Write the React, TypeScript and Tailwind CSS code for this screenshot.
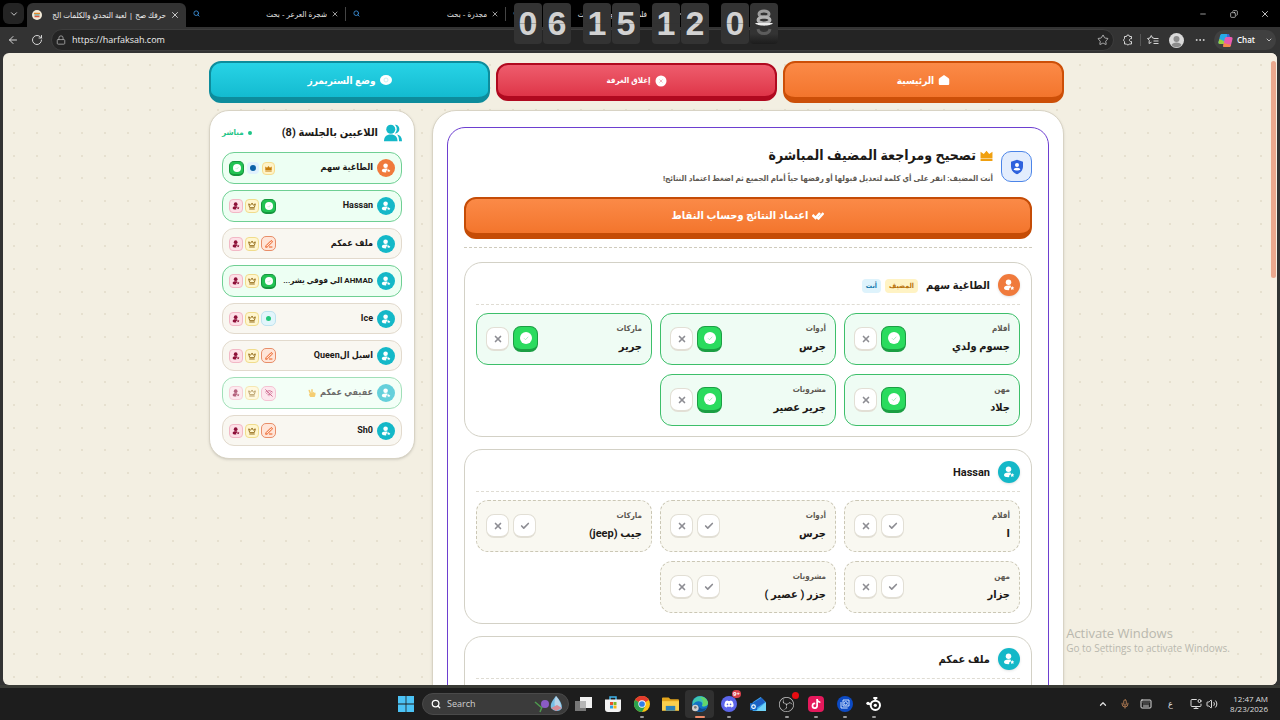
import React from 'react';
import {
    ArrowLeft, Check, ChevronDown, ChevronUp, Copy, Crown, Keyboard, Lock, Mic, Minus, MonitorDot,
    MoreHorizontal, PenLine, Plus, RotateCw, Search, Star, Volume2, WifiOff, X,
} from 'lucide-react';
import { FaDiscord, FaHandPeace, FaTiktok } from 'react-icons/fa';
import { SiObsstudio } from 'react-icons/si';

type Status = 'done' | 'writing' | 'online' | 'offline';

interface Player {
    name: string;
    status: Status;
    host?: boolean;
    hand?: boolean;
    active?: boolean;
}

interface Answer {
    category: string;
    word: string;
}

interface Review {
    name: string;
    host?: boolean;
    accepted: boolean;
    answers: Answer[];
}

const players: Player[] = [
    { name: 'الطاغية سهم', status: 'done', host: true, active: true },
    { name: 'Hassan', status: 'done', active: true },
    { name: 'ملف عمكم', status: 'writing' },
    { name: 'AHMAD الي فوقي يشر...', status: 'done', active: true },
    { name: 'Ice', status: 'online' },
    { name: 'اسيل الQueen', status: 'writing' },
    { name: 'عفيفي عمكم', status: 'offline', hand: true, active: true },
    { name: 'Sh0', status: 'writing' },
];

const reviews: Review[] = [
    {
        name: 'الطاغية سهم',
        host: true,
        accepted: true,
        answers: [
            { category: 'أفلام', word: 'جسوم ولدي' },
            { category: 'أدوات', word: 'جرس' },
            { category: 'ماركات', word: 'جرير' },
            { category: 'مهن', word: 'جلاد' },
            { category: 'مشروبات', word: 'جرير عصير' },
        ],
    },
    {
        name: 'Hassan',
        accepted: false,
        answers: [
            { category: 'أفلام', word: 'ا' },
            { category: 'أدوات', word: 'جرس' },
            { category: 'ماركات', word: 'جيب (jeep)' },
            { category: 'مهن', word: 'جزار' },
            { category: 'مشروبات', word: 'جزر ( عصير )' },
        ],
    },
    { name: 'ملف عمكم', accepted: false, answers: [] },
];

/* ---------- shared icons ---------- */

const PersonGlyph = ({ className }: { className: string }) => (
    <svg viewBox="0 0 24 24" className={className} fill="currentColor" aria-hidden="true">
        <circle cx="11" cy="6.500" r="5.500" />
        <path d="M11 13c-6 0-9 2-9 5s3 4.500 9 4.500c1 0 1.500-.1 2-.3-1-1.200-1-2.700 0-3.700.6-.6 1.200-.8 1.800-.9.1-1.500.7-2.700 1.800-3.500C15 13.300 13.200 13 11 13z" />
        <path d="M18.500 14l1.200 2.600 2.800.4-2 2 .5 2.900-2.500-1.400-2.500 1.400.5-2.900-2-2 2.800-.4z" />
    </svg>
);

const CrownSolid = ({ className }: { className: string }) => (
    <svg viewBox="0 0 24 24" className={className} fill="currentColor" aria-hidden="true">
        <path d="M1 5l6 4 5-6 5 6 6-4v12.500H1z" />
        <path d="M1 18.500h22V22H1z" />
    </svg>
);

const CheckDisc = ({ className }: { className: string }) => (
    <svg viewBox="0 0 24 24" className={className} aria-hidden="true">
        <circle cx="12" cy="12" r="12" fill="#fff" />
        <path d="M8 12.500l3 3 5.500-6" fill="none" stroke="#8de5ab" strokeWidth="1.500" />
    </svg>
);

const UsersGlyph = () => (
    <svg viewBox="0 0 24 24" className="size-[18px] text-[#14b8c8]" fill="currentColor" aria-hidden="true">
        <circle cx="9" cy="7" r="6" />
        <path d="M14.500 1c3.500-.4 6 2.300 6 5.700s-2.500 6.300-6 5.800c3.400-3 3.400-8.500 0-11.500z" />
        <path d="M0 23c0-6 3-9 9-9s9 3 9 9z" />
        <path d="M17.500 14c4 .5 6.500 3.500 6.500 9h-4c0-4-.5-6.500-2.500-9z" />
    </svg>
);

const DoubleCheck = () => (
    <svg viewBox="0 0 24 16" className="h-2 w-3" fill="none" stroke="currentColor" strokeWidth="5" aria-hidden="true">
        <path d="M1 6l6 6L16 2" />
        <path d="M10 11l3 2L23 2" />
    </svg>
);

/* ---------- browser chrome ---------- */

const Tab = ({ title }: { title: string }) => (
    <div className="flex h-full w-[159px] items-center gap-1 pl-[7px] pr-1.5 text-[#e4e4e4]">
        <Search className="size-[7px] shrink-0 text-[#3a8fd8]" strokeWidth={3} />
        <span dir="rtl" className="min-w-0 flex-1 truncate text-[8px]">{title}</span>
        <button aria-label="Close tab"><X className="size-2" /></button>
    </div>
);

const TabStrip = () => (
    <div className="flex h-[27px] shrink-0 items-center bg-black text-[#e4e4e4]">
        <button aria-label="Tab actions" className="ml-[3px] flex h-[21px] w-[21px] items-center justify-center rounded-md bg-[#242424]">
            <ChevronDown className="size-2.5" />
        </button>
        <div className="ml-[3px] mt-[3px] flex h-6 w-[159px] items-center gap-1 rounded-t-md bg-[#333333] pl-[5px] pr-1.5">
            <svg viewBox="0 0 20 20" className="size-[10px] shrink-0" aria-hidden="true">
                <circle cx="10" cy="10" r="10" fill="#f3ead8" />
                <path d="M4 7h12" stroke="#e08a2c" strokeWidth="3" />
                <path d="M5 10h10" stroke="#2f9aa8" strokeWidth="2" />
                <path d="M5 13h10" stroke="#d8553c" strokeWidth="3" />
            </svg>
            <span dir="rtl" className="min-w-0 flex-1 overflow-hidden whitespace-nowrap text-[8px] text-[#f0f0f0]">
                حرفك صح | لعبة التحدي والكلمات الج
            </span>
            <button aria-label="Close tab"><X className="size-2.5" /></button>
        </div>
        <Tab title="شجرة العرعر - بحث" />
        <span className="h-3.5 w-px bg-[#444]" />
        <Tab title="مجدرة - بحث" />
        <span className="h-3.5 w-px bg-[#444]" />
        <Tab title="فلم جسوم ولدي - بحث" />
        <button aria-label="New tab" className="ml-2"><Plus className="size-3" /></button>
        <div className="ml-auto flex items-center">
            <button aria-label="Minimize" className="flex w-[30px] justify-center"><Minus className="size-2" /></button>
            <button aria-label="Restore" className="flex w-[31px] justify-center"><Copy className="size-2 -scale-x-100" /></button>
            <button aria-label="Close" className="flex w-[31px] justify-center"><X className="size-2.5" /></button>
        </div>
    </div>
);

const Toolbar = () => (
    <div className="flex h-[26px] shrink-0 items-center bg-[#333333] pl-[7px] pr-1 text-[#d6d6d6]">
        <button aria-label="Back"><ArrowLeft className="size-3" /></button>
        <button aria-label="Reload" className="ml-3"><RotateCw className="size-3" /></button>
        <div className="ml-2 flex h-[22px] flex-1 items-center rounded-full border border-[#3d3d3d] bg-[#242424] px-1">
            <Lock className="size-2.5 text-[#a8a8a8]" />
            <input
                aria-label="Address"
                dir="ltr"
                defaultValue="https://harfaksah.com"
                className="ml-1.5 min-w-0 flex-1 bg-transparent text-[9px] text-[#eeeeee] outline-none"
            />
            <Star className="size-3" strokeWidth={1.5} />
        </div>
        <button aria-label="Extensions" className="ml-2">
            <svg viewBox="0 0 24 24" className="size-3" fill="none" stroke="currentColor" strokeWidth="2" aria-hidden="true">
                <path d="M9 5a3 3 0 016 0h4v4.500a3 3 0 100 5.500v5h-4.500a3 3 0 01-5.500 0H5v-5a3 3 0 010-5.500V5z" />
            </svg>
        </button>
        <span className="mx-1.5 h-3 w-px bg-[#555]" />
        <button aria-label="Favorites" className="flex items-center">
            <svg viewBox="0 0 24 20" className="h-[10px] w-3" fill="none" stroke="currentColor" strokeWidth="2" aria-hidden="true">
                <path d="M14 6.500l-2.800-.5L8.500 1 6 6 1 7l3.600 3.800L4 17l5-2.600" />
                <path d="M14 7h9M13 12h10M13 17h10" />
            </svg>
        </button>
        <button aria-label="Profile" className="ml-2.5">
            <svg viewBox="0 0 30 30" className="size-[15px]" aria-hidden="true">
                <circle cx="15" cy="15" r="15" fill="#d9d9d9" />
                <circle cx="15" cy="12" r="6" fill="#8c8c8c" />
                <path d="M5 24c2-7 18-7 20 0-5 6-15 6-20 0z" fill="#8c8c8c" />
            </svg>
        </button>
        <button aria-label="Settings" className="ml-2.5"><MoreHorizontal className="size-3" /></button>
        <button className="ml-2 flex h-5 items-center rounded-full bg-[#404040] pl-1 pr-[3px] text-[8px] font-semibold text-white">
            <svg viewBox="0 0 30 30" className="size-[15px]" aria-hidden="true">
                <path d="M8 2h9c2 0 3 1 2.500 3l-3 14c-.5 2-1.500 3-4 3H4c-2.500 0-3.500-1.500-3-4L4 6c.5-3 2-4 4-4z" fill="#27a9e8" />
                <path d="M3 12l13 6-3 4H4c-2.500 0-3.500-1.500-3-4z" fill="#9bd13c" />
                <path d="M18 8h8c2.500 0 3.500 1.500 3 4l-3 12c-.5 3-2 4-4 4h-9c-2 0-3-1-2.500-3l3-14c.5-2 2-3 4.500-3z" fill="#e85cb0" />
                <path d="M12 20l14 4c-.7 3-2 4-4 4h-9c-2 0-3-1-2.500-3z" fill="#f5894b" />
                <path d="M19 2h3l2 6h-6z" fill="#3c62dc" />
            </svg>
            <span className="ml-1">Chat</span>
            <ChevronDown className="ml-2.5 size-2" />
        </button>
    </div>
);

const Digit = ({ value }: { value: string }) => (
    <span className="relative flex h-[41px] w-7 items-center justify-center rounded-sm bg-[#333333]">
        {value}
        <span className="absolute inset-x-0 top-5 h-px bg-[#333333]/30" />
    </span>
);

const FlipClock = () => (
    <div className="absolute left-[514px] top-[3px] flex gap-3 font-['Liberation_Sans',sans-serif] text-[34px] font-bold text-[#d2d2d2]">
        {['06', '15', '12'].map((pair) => (
            <div key={pair} className="flex gap-px">
                <Digit value={pair[0]} />
                <Digit value={pair[1]} />
            </div>
        ))}
        <div className="flex gap-px">
            <Digit value="0" />
            {/* last digit is halfway through its flip */}
            <span className="relative flex h-[41px] w-7 justify-center overflow-hidden rounded-sm bg-linear-to-b from-[#333333] from-75% to-[#1c1c1c]">
                <svg viewBox="0 0 28 41" className="h-full w-full" fill="none" aria-hidden="true">
                    <ellipse cx="14" cy="11" rx="5" ry="3" stroke="#9c9c9c" strokeWidth="3" />
                    <ellipse cx="14" cy="17" rx="6" ry="3" stroke="#b4b4b4" strokeWidth="3" />
                    <path d="M5 20h18c-2 3.500-16 3.500-18 0z" fill="#ededed" />
                    <path d="M8 26c1 6 11 6 12 0" stroke="#5c5c5c" strokeWidth="3" />
                </svg>
            </span>
        </div>
    </div>
);

/* ---------- page ---------- */

const DottedBackground = () => (
    <svg className="absolute inset-0 h-full w-full" aria-hidden="true">
        <defs>
            <pattern id="dots" width="68" height="68" patternUnits="userSpaceOnUse">
                {[11, 34, 57].map((x) => [12, 35, 57].map((y) => (
                    <circle key={`${x}-${y}`} cx={x} cy={y} r="1" fill="#e2dbc8" />
                )))}
            </pattern>
        </defs>
        <rect width="100%" height="100%" fill="url(#dots)" />
    </svg>
);

const TopButtons = () => (
    <nav className="grid grid-cols-3 items-center gap-1.5 text-[10px] font-bold text-white">
        <button className="flex h-[42px] items-center justify-center gap-1 rounded-xl border-2 border-b-[6px] border-[#cc4f08] bg-linear-to-b from-[#fb8a47] to-[#f3752c]">
            <svg viewBox="0 0 24 24" className="size-3" fill="currentColor" aria-hidden="true">
                <path d="M12 2l8 5.500c1.500 1 2.500 2 2.500 4V19c0 2-1 3-3 3h-15c-2 0-3-1-3-3v-7.500c0-2 1-3 2.500-4z" />
            </svg>
            الرئيسية
        </button>
        <button className="flex h-[38px] items-center justify-center gap-1 rounded-xl border-2 border-b-[5px] border-[#b0091f] bg-linear-to-b from-[#ee5c6d] to-[#df3448] text-[8px]">
            <svg viewBox="0 0 24 24" className="size-3" aria-hidden="true">
                <circle cx="12" cy="12" r="11" fill="#fff" />
                <path d="M9 9l6 6M15 9l-6 6" stroke="#ee9aa5" strokeWidth="1.500" />
            </svg>
            إغلاق الغرفة
        </button>
        <button className="flex h-[42px] items-center justify-center gap-1 rounded-xl border-2 border-b-[6px] border-[#0d8c9c] bg-linear-to-b from-[#27d3e6] to-[#13bbd0]">
            <svg viewBox="0 0 24 24" className="size-3" aria-hidden="true">
                <ellipse cx="12" cy="12" rx="12" ry="10" fill="#fff" />
                <circle cx="12" cy="12" r="4" fill="none" stroke="#b5ecf2" strokeWidth="1.500" />
            </svg>
            وضع الستريمرز
        </button>
    </nav>
);

const StatusBadge = ({ status }: { status: Status }) => {
    if (status === 'done') {
        return (
            <span className="flex size-[15px] items-center justify-center rounded-[5px] border border-b-2 border-[#16963d] bg-[#22c353]">
                <CheckDisc className="size-2" />
            </span>
        );
    }
    if (status === 'writing') {
        return (
            <span className="flex size-[15px] items-center justify-center rounded-[5px] border border-[#e88e69] bg-[#ffe5d8] text-[#ea5a1c]">
                <PenLine className="size-2" strokeWidth={3} />
            </span>
        );
    }
    if (status === 'online') {
        return (
            <span className="flex size-[15px] items-center justify-center rounded-[5px] border border-[#bfe3ef] bg-[#e2f5fb]">
                <span className="size-[5px] rounded-full bg-[#22c77a]" />
            </span>
        );
    }
    return (
        <span className="flex size-[15px] items-center justify-center rounded-[5px] border border-[#f0a5bd] bg-[#fcdde6] text-[#b8265c]">
            <WifiOff className="size-2" strokeWidth={3} />
        </span>
    );
};

const PlayerRow = ({ player }: { player: Player }) => (
    <li
        className={`flex items-center rounded-xl border px-1.5 ${
            player.active ? 'h-8 border-[#6fcf93] bg-[#edfff3]' : 'h-[31px] border-[#e2dacd] bg-[#f9f7f1]'
        } ${player.status === 'offline' ? 'opacity-65' : ''}`}
    >
        <span className={`flex size-[18px] shrink-0 items-center justify-center rounded-full text-white ${player.host ? 'bg-[#f07a3c]' : 'bg-[#14b8c8]'}`}>
            <PersonGlyph className="size-2.5" />
        </span>
        <span
            className={`mx-1 flex min-w-0 flex-1 items-center gap-1 font-bold text-[#1c1917] ${
                player.name.length > 16 ? 'text-[8px]' : 'text-[9px]'
            }`}
        >
            <span className="whitespace-nowrap">{player.name}</span>
            {player.hand && <FaHandPeace className="size-2 shrink-0 text-[#f0b429]" />}
        </span>
        <span className="flex shrink-0 items-center gap-[2px]">
            {player.host ? (
                <>
                    <span className="flex size-[13px] items-center justify-center rounded-sm border border-[#f5dd8e] bg-[#fff3c7] text-[#c67d0a]">
                        <CrownSolid className="size-[7px]" />
                    </span>
                    <span className="mx-px flex size-3 items-center justify-center rounded-sm bg-[#e0f1fd]">
                        <span className="size-1.5 rounded-full bg-[#0b62a8]" />
                    </span>
                    <StatusBadge status={player.status} />
                </>
            ) : (
                <>
                    <StatusBadge status={player.status} />
                    <button aria-label="نقل الاستضافة" className="flex size-3.5 items-center justify-center rounded-sm border border-[#f0dc8c] bg-[#fff6cf] text-[#97701e]">
                        <Crown className="size-2" strokeWidth={3} />
                    </button>
                    <button aria-label="طرد اللاعب" className="flex size-3.5 items-center justify-center rounded-sm border border-[#f2b8c6] bg-[#fde0e7] text-[#8d0f38]">
                        <PersonGlyph className="size-2" />
                    </button>
                </>
            )}
        </span>
    </li>
);

const PlayersPanel = () => (
    <aside className="w-[206px] shrink-0 rounded-[20px] border border-[#d8d3c4] bg-white px-3 pb-3 pt-[11px] shadow-sm">
        <div className="mb-2 flex h-[22px] items-center">
            <UsersGlyph />
            <h2 className="mr-1.5 text-[11px] font-bold text-[#1c1917]">اللاعبين بالجلسة (8)</h2>
            <span className="mr-auto flex items-center gap-1 text-[8px] font-bold text-[#1fc487]">
                <span className="size-1 rounded-full bg-[#1fc487]" />
                مباشر
            </span>
        </div>
        <ul className="flex flex-col gap-1.5">
            {players.map((player) => <PlayerRow key={player.name} player={player} />)}
        </ul>
    </aside>
);

const AnswerCell = ({ answer, accepted }: { answer: Answer; accepted: boolean }) => (
    <div
        className={`flex h-[52px] items-center gap-1 rounded-xl border px-[9px] ${
            accepted ? 'border-[#3dbf6a] bg-[#effcf4]' : 'border-dashed border-[#cbc7b5] bg-[#f9f8f1]'
        }`}
    >
        <div className="min-w-0 flex-1">
            <p className="text-[8px] leading-3 font-bold text-[#5d5852]">{answer.category}</p>
            <p className="mt-1 truncate text-[11px] leading-4 font-bold text-[#1c1917]">{answer.word}</p>
        </div>
        {accepted ? (
            <button aria-label="مقبولة" className="flex h-[26px] w-[25px] items-center justify-center rounded-lg border border-b-[3px] border-[#1b9e43] bg-[#2adb5e]">
                <CheckDisc className="size-3" />
            </button>
        ) : (
            <button aria-label="قبول" className="flex h-6 w-[23px] items-center justify-center rounded-lg border border-b-2 border-[#e2dfd5] bg-white text-[#8d8d93]">
                <Check className="size-2.5" strokeWidth={4} />
            </button>
        )}
        <button aria-label="رفض" className="flex h-6 w-[23px] items-center justify-center rounded-lg border border-b-2 border-[#e2dfd5] bg-white text-[#8d8d93]">
            <X className="size-2.5" strokeWidth={4} />
        </button>
    </div>
);

const ReviewCard = ({ review }: { review: Review }) => (
    <article className="min-h-[175px] rounded-[18px] border border-[#d3d1c6] bg-white px-[11px] pb-[10px] pt-[11px]">
        <div className="mb-2 flex h-[31px] items-start border-b border-dashed border-[#dfdcd3]">
            <span className={`flex size-[22px] items-center justify-center rounded-full text-white shadow-sm ${review.host ? 'bg-[#f07a3c]' : 'bg-[#14b8c8]'}`}>
                <PersonGlyph className="size-3" />
            </span>
            <h3 className="mx-2 text-[11px] leading-6 font-bold text-[#1c1917]">{review.name}</h3>
            {review.host && (
                <span className="flex h-6 items-center gap-1 text-[7px] font-bold">
                    <span className="rounded-sm bg-[#fff3c4] px-1 leading-[14px] text-[#b8720c]">المضيف</span>
                    <span className="rounded-sm bg-[#def3fc] px-1 leading-[14px] text-[#1478ad]">أنت</span>
                </span>
            )}
        </div>
        <div className="grid grid-cols-3 gap-x-2 gap-y-[9px]">
            {review.answers.map((answer) => (
                <AnswerCell key={answer.category} answer={answer} accepted={review.accepted} />
            ))}
        </div>
    </article>
);

const ReviewPanel = () => (
    <main className="min-w-0 flex-1 rounded-[24px] border border-[#d8d3c4] bg-white px-[14px] py-4 shadow-sm">
        <section className="rounded-[18px] border border-[#6d3fd0] px-4 pb-4 pt-[15px]">
            <div className="flex h-12 items-center gap-2">
                <span className="mt-2 flex size-[31px] shrink-0 items-center justify-center self-start rounded-[10px] border border-[#4c85e8] bg-[#e3edfd]">
                    <svg viewBox="0 0 24 24" className="size-4" aria-hidden="true">
                        <path d="M12 1l9 3v7c0 6-4 10-9 12-5-2-9-6-9-12V4z" fill="#2f62dd" />
                        <circle cx="12" cy="9" r="3" fill="#fff" />
                        <path d="M7 16c0-4 10-4 10 0-2 1.500-8 1.500-10 0z" fill="#fff" />
                    </svg>
                </span>
                <div className="min-w-0">
                    <h1 className="flex h-6 items-center gap-1 whitespace-nowrap text-[14px] font-bold text-[#1c1917]">
                        <CrownSolid className="size-[13px] text-[#f0a010]" />
                        تصحيح ومراجعة المضيف المباشرة
                    </h1>
                    <p className="whitespace-nowrap text-[8px] leading-6 font-bold text-[#5d5852]">
                        أنت المضيف: انقر على أي كلمة لتعديل قبولها أو رفضها حياً أمام الجميع ثم اضغط اعتماد النتائج!
                    </p>
                </div>
            </div>
            <button className="mt-1.5 flex h-[42px] w-full items-center justify-center gap-1 rounded-xl border-2 border-b-[6px] border-[#c54c06] bg-linear-to-b from-[#fb8a47] to-[#f3752c] text-[11px] font-bold text-white">
                <DoubleCheck />
                اعتماد النتائج وحساب النقاط
            </button>
            <hr className="mt-2 border-t border-dashed border-[#cfcbbd]" />
            <div className="mt-3.5 flex flex-col gap-3">
                {reviews.map((review) => <ReviewCard key={review.name} review={review} />)}
            </div>
        </section>
    </main>
);

/* ---------- taskbar ---------- */

const TaskIcon = ({ label, dot, children }: { label: string; dot?: boolean; children: React.ReactNode }) => (
    <button aria-label={label} className="relative flex h-7 w-[29px] items-center justify-center">
        {children}
        {dot && <span className="absolute bottom-0 h-0.5 w-1 rounded-full bg-[#9a9a9a]" />}
    </button>
);

const Taskbar = () => (
    <footer className="relative flex h-[35px] shrink-0 items-center border-t-[3px] border-[#3a3b36] bg-[#1d1d1d] text-white">
        <div className="flex flex-1 items-center justify-center pl-1.5">
            <button aria-label="Start" className="mr-2">
                <svg viewBox="0 0 16 16" className="size-4" fill="#4cc3f5" aria-hidden="true">
                    <path d="M0 0h7.600v7.600H0zM8.400 0H16v7.600H8.400zM0 8.400h7.600V16H0zM8.400 8.400H16V16H8.400z" />
                </svg>
            </button>
            <label className="flex h-[22px] w-[147px] items-center rounded-full border border-[#4a4a4a] bg-[#3b3b3b] pl-2 pr-1">
                <Search className="size-2.5 shrink-0" strokeWidth={3} />
                <input aria-label="Search" placeholder="Search" className="ml-1.5 w-full min-w-0 bg-transparent text-[9px] outline-none placeholder:text-[#d0d0d0]" />
                <svg viewBox="0 0 30 18" className="h-[18px] w-[30px] shrink-0" aria-hidden="true">
                    <path d="M1 7l7 6M6 17l2-5 6-3" stroke="#4e9a4e" strokeWidth="1.500" fill="none" />
                    <circle cx="11" cy="9" r="4" fill="#8a5bc4" />
                    <path d="M22 1c-4 5-6 8-5 12 3 4 9 4 11 0 0-4-2-8-6-12z" fill="#77bfe6" />
                    <path d="M22 1c-2 5-2 9 0 14l5-3c0-4-2-7-5-11z" fill="#b9d4e8" />
                    <path d="M17 13l5 3 6-3-5-3z" fill="#d58b96" />
                </svg>
            </label>
            <TaskIcon label="Task view">
                <svg viewBox="0 0 17 17" className="size-[17px]" aria-hidden="true">
                    <path d="M5 1h12v11H5z" fill="#f0f0f0" />
                    <path d="M0 5h11v10H0z" fill="#777" />
                    <path d="M5 5h6v7H5z" fill="#b5b5b5" />
                </svg>
            </TaskIcon>
            <TaskIcon label="Microsoft Store">
                <svg viewBox="0 0 16 16" className="size-4" aria-hidden="true">
                    <path d="M5 4V1h6v3" fill="none" stroke="#3fb3ea" strokeWidth="1.500" />
                    <path d="M0 3.500h16V13c0 2-1 3-3 3H3c-2 0-3-1-3-3z" fill="#f3f3f3" />
                    <path d="M5 6h3v3H5z" fill="#e9522b" />
                    <path d="M8.500 6h3v3h-3z" fill="#7dba2b" />
                    <path d="M5 9.500h3v3H5z" fill="#2aa2e6" />
                    <path d="M8.500 9.500h3v3h-3z" fill="#f7b717" />
                </svg>
            </TaskIcon>
            <TaskIcon label="Chrome" dot>
                <svg viewBox="0 0 24 24" className="size-4" aria-hidden="true">
                    <circle cx="12" cy="12" r="12" fill="#fbc116" />
                    <path d="M12 12L1.600 6A12 12 0 0122.400 6z" fill="#e33b2e" />
                    <path d="M12 12L1.600 6A12 12 0 0012 24l5-9z" fill="#2da14c" />
                    <circle cx="12" cy="12" r="5.500" fill="#fff" />
                    <circle cx="12" cy="12" r="4.300" fill="#2f7de9" />
                </svg>
            </TaskIcon>
            <TaskIcon label="File Explorer">
                <svg viewBox="0 0 18 16" className="h-4 w-[17px]" aria-hidden="true">
                    <path d="M1 1h6l2 2h8c.6 0 1 .4 1 1v11H0V2c0-.6.4-1 1-1z" fill="#e3a51c" />
                    <path d="M0 5h18v10H0z" fill="#fad04d" />
                    <path d="M4 10h10v5H4z" fill="#2d83b8" />
                </svg>
            </TaskIcon>
            <button aria-label="Edge" className="relative flex h-7 w-[29px] items-center justify-center rounded-sm bg-[#303030]">
                <svg viewBox="0 0 24 24" className="size-4" aria-hidden="true">
                    <circle cx="12" cy="12" r="12" fill="#1373c4" />
                    <path d="M1 9C4-2 21-3 24 10c0 5-5 7-9 5 2-4-1-7-5-7-4 0-7 2-9 6z" fill="#3fc7b0" />
                    <path d="M12 1c7 0 12 5 12 10-1 4-5 5-9 4 3-5 2-9-3-14z" fill="#63d66b" />
                    <path d="M9 12c0 6 6 9 13 6-4 6-12 7-16 3z" fill="#0f4c8f" />
                    <circle cx="5" cy="18" r="5" fill="#cfcfcf" />
                    <circle cx="5" cy="17" r="2" fill="#777" />
                </svg>
                <span className="absolute bottom-0 h-0.5 w-2.5 rounded-full bg-[#ef8a68]" />
            </button>
            <TaskIcon label="Discord" dot>
                <span className="flex size-4 items-center justify-center rounded-full bg-[#5b65ea]"><FaDiscord className="size-2.5" /></span>
                <span className="absolute right-0.5 top-0 flex h-2 w-[9px] items-center justify-center rounded-full bg-[#d9404c] text-[6px] font-bold">9+</span>
            </TaskIcon>
            <TaskIcon label="Outlook">
                <svg viewBox="0 0 18 18" className="size-4" aria-hidden="true">
                    <path d="M3 7l9-6 6 6v10H3z" fill="#3aa4ee" />
                    <path d="M3 8l10-6 4 5-9 6z" fill="#1d5fc4" />
                    <path d="M6 17L18 7v10z" fill="#6fd2f7" />
                    <path d="M0 8h8v8H0z" fill="#1668c7" />
                    <circle cx="4" cy="12" r="2" fill="none" stroke="#fff" strokeWidth="1.300" />
                </svg>
            </TaskIcon>
            <TaskIcon label="OBS Studio" dot>
                <SiObsstudio className="size-[15px] text-[#c9c9c9]" />
                <span className="absolute right-0.5 top-0.5 size-[7px] rounded-full bg-[#e80c12]" />
            </TaskIcon>
            <TaskIcon label="TikTok" dot>
                <span className="flex size-4 items-center justify-center rounded-sm bg-[#e5195c]"><FaTiktok className="size-2.5" /></span>
            </TaskIcon>
            <TaskIcon label="Screen share" dot>
                <svg viewBox="0 0 24 24" className="size-4" fill="none" aria-hidden="true">
                    <circle cx="12" cy="12" r="12" fill="#0c4ac4" />
                    <path d="M6 9v9h10M9 6h9v9H9z" stroke="#cfe2ff" strokeWidth="1.500" />
                    <circle cx="13" cy="11" r="2.500" stroke="#cfe2ff" strokeWidth="1.500" />
                </svg>
            </TaskIcon>
            <TaskIcon label="SteelSeries" dot>
                <svg viewBox="0 0 24 24" className="size-4" fill="none" stroke="#fff" aria-hidden="true">
                    <circle cx="14" cy="14" r="7" strokeWidth="3" />
                    <circle cx="14" cy="14" r="2.500" fill="#fff" stroke="none" />
                    <path d="M11 3h6M14 3v5M3 11l5 2" strokeWidth="3" />
                    <circle cx="3" cy="11" r="2.500" fill="#fff" stroke="none" />
                </svg>
            </TaskIcon>
        </div>
        <div className="absolute right-3 flex items-center text-[#dddddd]">
            <ChevronUp className="size-2.5" strokeWidth={3} />
            <Mic className="ml-3 size-2.5 text-[#c98a5b]" />
            <Keyboard className="ml-2.5 size-3" />
            <span className="ml-4 w-2 text-[9px]">ع</span>
            <MonitorDot className="ml-3.5 size-3" />
            <Volume2 className="ml-1 size-3" />
            <div className="ml-3 text-right text-[8px] leading-[10px]">
                <p>12:47 AM</p>
                <p>8/23/2026</p>
            </div>
        </div>
    </footer>
);

const App = () => (
    <div className="relative flex h-screen flex-col overflow-hidden bg-[#333333] font-['Open_Sans','DejaVu_Sans_Condensed','DejaVu_Sans',sans-serif]">
        <TabStrip />
        <Toolbar />
        <FlipClock />
        <div className="relative mx-[3px] flex min-h-0 flex-1 overflow-hidden rounded-md bg-[#f3efe2]">
            <DottedBackground />
            <div dir="rtl" className="relative min-w-0 flex-1 overflow-hidden pt-2 font-['Roboto','DejaVu_Sans_Condensed','DejaVu_Sans',sans-serif]">
                <div className="mx-auto max-w-[855px]">
                    <TopButtons />
                    <div className="mt-[7px] flex items-start gap-[17px]">
                        <ReviewPanel />
                        <PlayersPanel />
                    </div>
                </div>
            </div>
            <div className="relative w-[7px] shrink-0 bg-[#f7eee2] px-px pt-2">
                <div className="h-[217px] rounded-full bg-[#eba88e]" />
            </div>
        </div>
        <Taskbar />
        <div className="pointer-events-none absolute bottom-[65px] right-[50px] text-[#b9b8ae]">
            <p className="text-[13px] leading-[18px]">Activate Windows</p>
            <p className="text-[10px] leading-[13px]">Go to Settings to activate Windows.</p>
        </div>
    </div>
);

export default App;
